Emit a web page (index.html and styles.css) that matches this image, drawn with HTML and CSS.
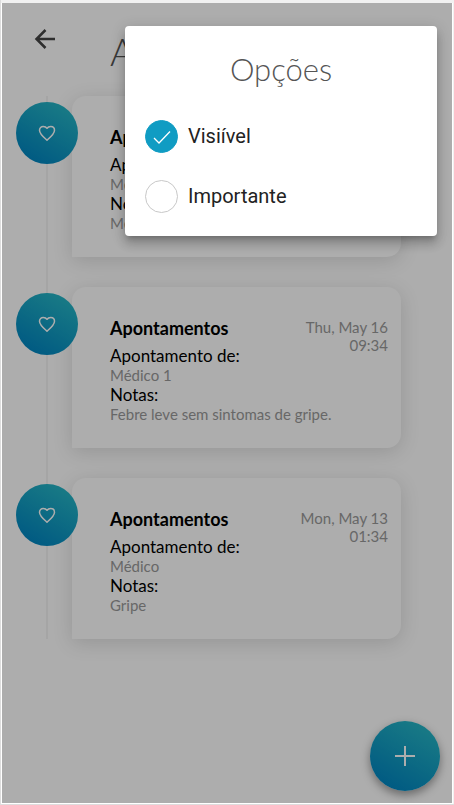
FILE: index.html
```html
<!DOCTYPE html>
<html lang="pt">
<head>
<meta charset="utf-8">
<meta name="viewport" content="width=device-width, initial-scale=1">
<title>Apontamentos</title>
<link rel="stylesheet" href="styles.css">
</head>
<body>
<svg class="sprite" aria-hidden="true">
  <symbol id="heart" viewBox="0 0 18 18">
    <path d="M9 16.2C5.600 13.200 1.500 9.900 1.500 6.200C1.500 3.900 3.200 2.400 5.200 2.400C6.900 2.400 8.300 3.100 9 4.300C9.700 3.100 11.100 2.400 12.800 2.400C14.800 2.400 16.500 3.900 16.500 6.200C16.500 9.900 12.400 13.200 9 16.200Z" fill="none" stroke="currentColor" stroke-width="1.500" stroke-linejoin="round"/>
  </symbol>
</svg>
<div class="screen">
  <header class="header">
    <button class="back" type="button" aria-label="Voltar">
      <svg class="back-icon" viewBox="0 0 20 20"><path d="M20 10H2M10.500 1L1.500 10L10.500 19" fill="none" stroke="currentColor" stroke-width="2.500"/></svg>
    </button>
    <h1 class="title">Apontamentos</h1>
  </header>

  <main class="timeline">
    <article class="entry">
      <span class="badge"><svg class="heart"><use href="#heart"/></svg></span>
      <section class="card">
        <h2 class="card-title">Apontamentos</h2>
        <p class="label">Apontamento de:</p>
        <p class="value">Médico</p>
        <p class="label">Notas:</p>
        <p class="value">Médico</p>
      </section>
    </article>
    <article class="entry">
      <span class="badge"><svg class="heart"><use href="#heart"/></svg></span>
      <section class="card">
        <time class="date">Thu, May 16<br>09:34</time>
        <h2 class="card-title">Apontamentos</h2>
        <p class="label">Apontamento de:</p>
        <p class="value">Médico 1</p>
        <p class="label">Notas:</p>
        <p class="value">Febre leve sem sintomas de gripe.</p>
      </section>
    </article>
    <article class="entry">
      <span class="badge"><svg class="heart"><use href="#heart"/></svg></span>
      <section class="card">
        <time class="date">Mon, May 13<br>01:34</time>
        <h2 class="card-title">Apontamentos</h2>
        <p class="label">Apontamento de:</p>
        <p class="value">Médico</p>
        <p class="label">Notas:</p>
        <p class="value">Gripe</p>
      </section>
    </article>
  </main>

  <button class="fab" type="button" aria-label="Adicionar">
    <svg class="fab-icon" viewBox="0 0 20 20"><path d="M10 0V20M0 10H20" stroke="currentColor" stroke-width="2"/></svg>
  </button>

  <div class="backdrop"></div>

  <div class="popover" role="dialog" aria-labelledby="options-title">
    <h2 class="popover-title" id="options-title">Opções</h2>
    <label class="option"><input class="check" type="checkbox" checked>Visiível</label>
    <label class="option"><input class="check" type="checkbox">Importante</label>
  </div>
</div>
</body>
</html>
```
FILE: styles.css
```css
* {
  box-sizing: border-box;
}

body {
  margin: 0;
  min-height: 100vh;
  display: flex;
  padding: 3px 2px 2px;
  background: #fff;
  box-shadow: inset 1px 0 #ddd, inset 0 3px #f1f1f1, inset 0 -1px #ddd, inset -1px 0 #f1f1f1;
  font-family: Lato, "Liberation Sans", sans-serif;
  color: #000;
}

h1, h2, p {
  margin: 0;
}

.sprite {
  position: absolute;
  width: 0;
  height: 0;
}

.screen {
  position: relative;
  flex: 1;
  background: #fff;
  overflow: hidden;
}

.header {
  display: flex;
  align-items: flex-start;
  gap: 54px;
  padding: 24px 32px 21px;
}

.back {
  display: flex;
  padding: 2px 0;
  border: 0;
  background: none;
  color: #444;
}

.back-icon {
  width: 22px;
  height: 20px;
}

.title {
  font-size: 38px;
  line-height: 48px;
  font-weight: 300;
  color: #555;
}

.timeline {
  display: flex;
  flex-direction: column;
  gap: 30px;
  margin: 0 51px 0 14px;
  background: linear-gradient(#f3f3f3, #f3f3f3) 30px 0 / 2px 100% no-repeat;
}

.entry {
  display: flex;
  align-items: flex-start;
}

.badge,
.fab {
  display: flex;
  align-items: center;
  justify-content: center;
  border: 0;
  border-radius: 50%;
  color: #fff;
  background: linear-gradient(30deg, #0084c0 10%, #26b6c5 90%);
}

.badge {
  z-index: 1;
  width: 62px;
  height: 62px;
  margin: 6px -6px 0 0;
}

.heart {
  width: 18px;
  height: 18px;
}

.card {
  flex: 1;
  padding: 31px 13px 24px 38px;
  border-radius: 14px 14px 14px 0;
  background: #fff;
  box-shadow: 0 4px 20px rgba(0, 0, 0, 0.14);
}

.card-title {
  font-size: 18px;
  line-height: 20px;
  font-weight: 700;
  margin-bottom: 8px;
}

.date {
  float: right;
  font-size: 15px;
  line-height: 18px;
  text-align: right;
  color: #999;
}

.label {
  font-size: 17px;
  line-height: 19px;
}

.value {
  font-size: 15px;
  line-height: 20px;
  color: #999;
}

.fab {
  position: absolute;
  right: 12px;
  bottom: 12px;
  width: 70px;
  height: 70px;
  padding: 0;
  box-shadow: 0 4px 10px rgba(0, 0, 0, 0.4);
}

.fab-icon {
  width: 20px;
  height: 20px;
}

.backdrop {
  position: absolute;
  inset: 0;
  z-index: 2;
  background: rgba(0, 0, 0, 0.32);
}

.popover {
  position: absolute;
  z-index: 3;
  top: 23px;
  right: 15px;
  width: 312px;
  padding: 22px 20px 23px;
  border-radius: 4px;
  background: #fff;
  box-shadow: 0 5px 5px -3px rgba(0, 0, 0, 0.2), 0 8px 10px 1px rgba(0, 0, 0, 0.14), 0 3px 14px 2px rgba(0, 0, 0, 0.12);
}

.popover-title {
  margin-bottom: 29px;
  font-size: 31px;
  line-height: 43px;
  font-weight: 300;
  text-align: center;
  color: #555;
}

.option {
  display: flex;
  align-items: center;
  gap: 10px;
  font: 20px/33px Roboto, sans-serif;
  color: #222;
}

.option + .option {
  margin-top: 27px;
}

.check {
  appearance: none;
  width: 33px;
  height: 33px;
  margin: 0;
  border: 1px solid #c8c8c8;
  border-radius: 50%;
  background: #fff;
}

.check:checked {
  border-color: #109cc3;
  background: #109cc3 url('data:image/svg+xml,<svg xmlns="http://www.w3.org/2000/svg" viewBox="0 0 18 14"><path d="M1 8L6 13L17 1.500" fill="none" stroke="white" stroke-width="1.300"/></svg>') center / 18px 14px no-repeat;
}
```
